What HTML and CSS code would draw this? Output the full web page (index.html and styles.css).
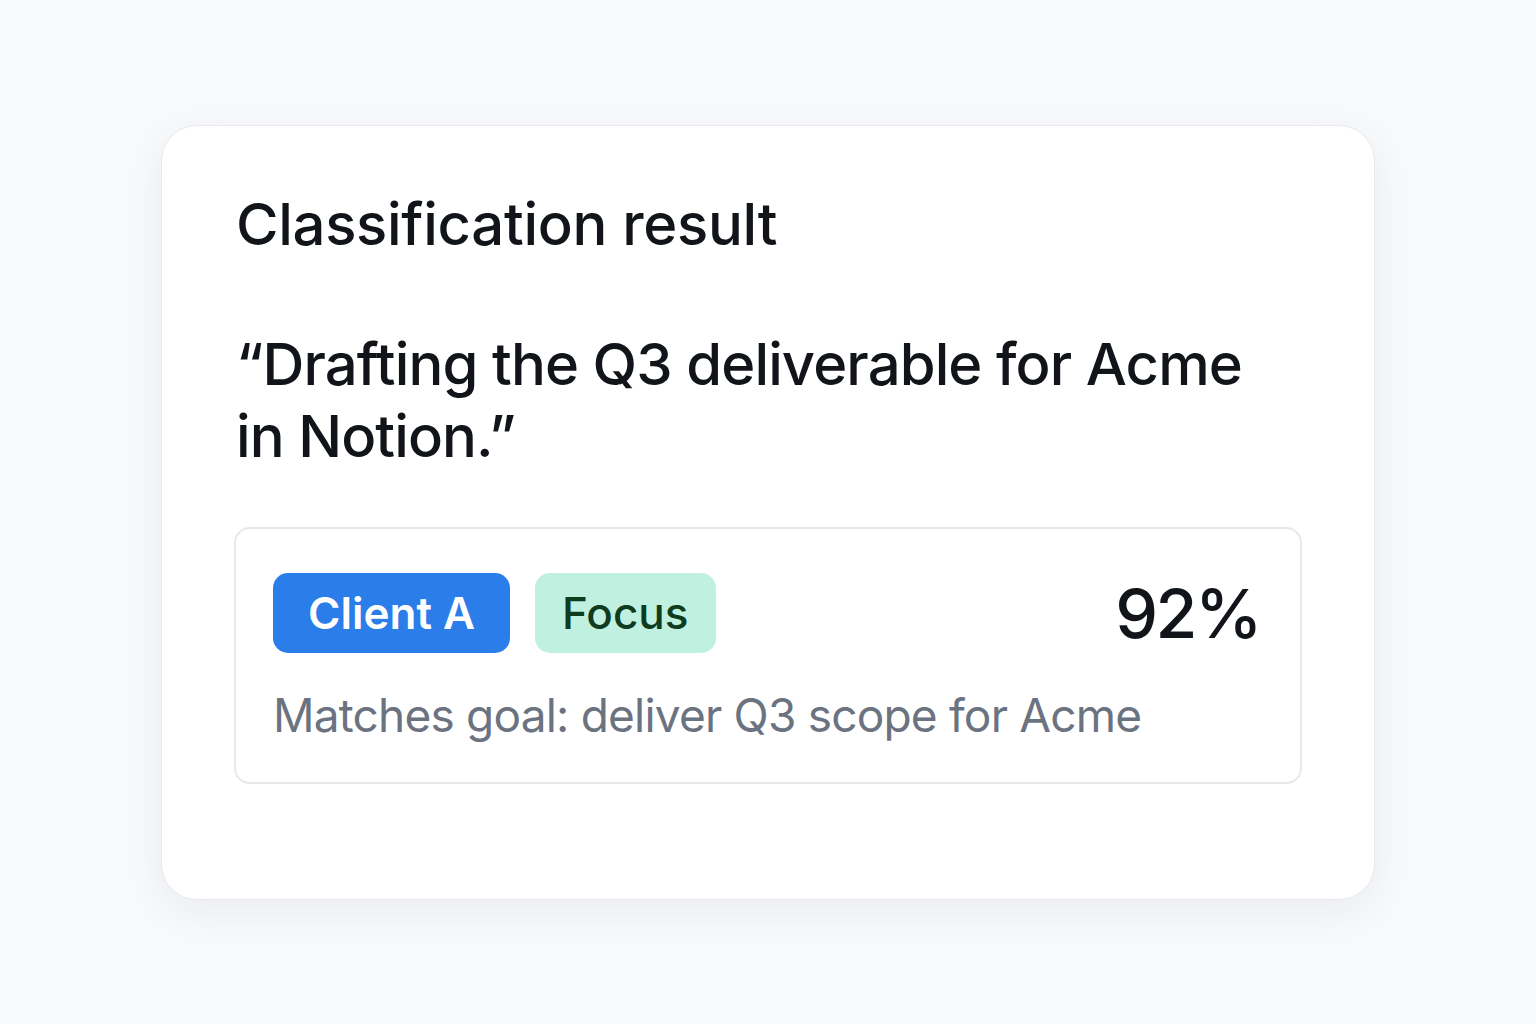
FILE: index.html
```html
<!DOCTYPE html>
<html lang="en">
<head>
    <meta charset="UTF-8">
    <title>Classification result</title>
    <link rel="stylesheet" href="styles.css">
</head>
<body>
    <div class="card">
        <h2 class="title">Classification result</h2>

        <p class="quote">“Drafting the Q3 deliverable for Acme in Notion.”</p>

        <div class="result">
            <div class="result-row">
                <span class="chip chip-client">Client A</span>
                <span class="chip chip-focus">Focus</span>
                <span class="score">92%</span>
            </div>
            <div class="reason">Matches goal: deliver Q3 scope for Acme</div>
        </div>
    </div>
</body>
</html>
```

FILE: styles.css
```css
body {
    font-family: Inter, "Noto Sans", sans-serif;
    background-color: #f8f9fb;
    margin: 0;
    padding: 125px 161px;
    color: #111418;
}
.card {
    background-color: white;
    border: 1px solid #e8eaee;
    border-radius: 36px;
    box-shadow: 0 12px 40px rgba(20, 30, 50, 0.06);
    padding: 62px 72px 115px 72px;
}
.title {
    font-size: 58px;
    font-weight: 500;
    line-height: 72px;
    margin: 0 0 0 2px;
    letter-spacing: -0.3px;
}
.quote {
    font-size: 58px;
    font-weight: 500;
    line-height: 72px;
    margin: 68px 0 0 2px;
    max-width: 1040px;
    letter-spacing: -0.9px;
}
.result {
    margin-top: 55px;
    border: 2px solid #e6e8ec;
    border-radius: 16px;
    padding: 43px 40px 37px 37px;
}
.result-row {
    display: flex;
    align-items: center;
    gap: 25px;
}
.chip {
    font-size: 44px;
    font-weight: 600;
    line-height: 80px;
    padding: 0 35px;
    border-radius: 15px;
}
.chip-client {
    background-color: #2b7de9;
    color: white;
}
.chip-focus {
    background-color: #c0f0df;
    color: #0f3b1e;
    font-weight: 500;
    padding: 0 27px;
}
.score {
    margin-left: auto;
    font-size: 68px;
    font-weight: 500;
    letter-spacing: -2.5px;
}
.reason {
    margin-top: 31px;
    font-size: 46px;
    line-height: 60px;
    color: #6b7381;
    letter-spacing: -0.8px;
}
```
